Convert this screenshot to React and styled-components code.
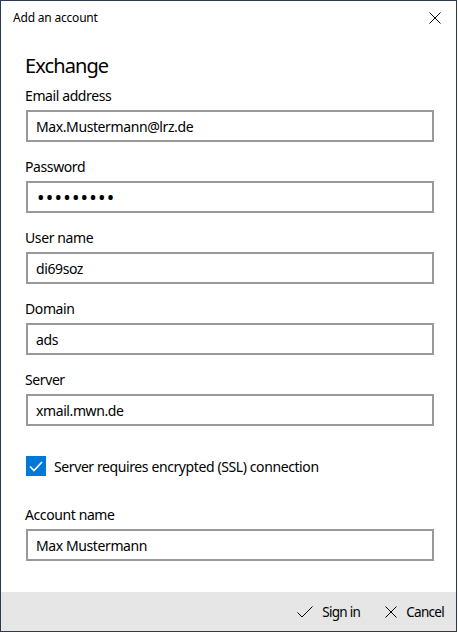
import React from "react";
import styled, { createGlobalStyle } from "styled-components";

const Global = createGlobalStyle`
  html, body { margin: 0; padding: 0; background: #ffffff; }
  body { font-family: "Noto Sans", "Open Sans", sans-serif; color: #000; }
`;

const Window = styled.div`
  box-sizing: border-box;
  width: 457px;
  height: 632px;
  border: 1px solid #2b3b4b;
  background: #fff;
  display: flex;
  flex-direction: column;
`;

const TitleBar = styled.div`
  height: 33px;
  display: flex;
  align-items: center;
  justify-content: space-between;
  padding: 0 15px 0 12px;
  font-size: 12px;
  letter-spacing: -0.2px;
`;

const TitleText = styled.span`
  line-height: 16px;
`;

const IconBox = styled.span`
  display: inline-flex;
  align-items: center;
  justify-content: center;
  width: ${(p) => p.$size || 12}px;
  height: ${(p) => p.$size || 12}px;
`;

const Content = styled.div`
  flex: 1;
  display: flex;
  flex-direction: column;
  padding: 18px 23px 0 24px;
`;

const Heading = styled.h1`
  margin: 0 0 6px;
  font-size: 20px;
  font-weight: 400;
  line-height: 28px;
  letter-spacing: -0.9px;
`;

const Fields = styled.div`
  display: flex;
  flex-direction: column;
  gap: 15px;
`;

const Field = styled.label`
  display: flex;
  flex-direction: column;
  padding-left: 1px;
`;

const Label = styled.span`
  font-size: 14px;
  line-height: 20px;
  margin-bottom: 4px;
  margin-left: -1px;
  letter-spacing: -0.4px;
`;

const Input = styled.input`
  box-sizing: border-box;
  width: 408px;
  height: 32px;
  border: 2px solid #999999;
  padding: 0 8px;
  margin: 0;
  font-family: inherit;
  font-size: 14px;
  color: #000;
  background: #fff;
  outline: none;
  letter-spacing: -0.4px;

  &[type="password"] {
    font-size: 20px;
    letter-spacing: 1.2px;
    padding-left: 9px;
  }
`;

const CheckRow = styled.div`
  display: flex;
  align-items: center;
  gap: 8px;
  margin: 30px 0 29px 1px;
  font-size: 14px;
  letter-spacing: -0.4px;
  height: 20px;
`;

const CheckBox = styled.span`
  width: 20px;
  height: 20px;
  background: #0078d7;
  display: inline-flex;
  align-items: center;
  justify-content: center;
`;

const Footer = styled.div`
  height: 39px;
  background: #e6e6e6;
  display: flex;
  align-items: center;
  justify-content: flex-end;
  gap: 25px;
  padding: 0 12px 0 0;
`;

const FooterButton = styled.button`
  display: inline-flex;
  align-items: center;
  gap: 9px;
  border: none;
  background: transparent;
  padding: 0;
  font-family: inherit;
  font-size: 13.5px;
  letter-spacing: -0.7px;
  color: #000;
  line-height: 20px;
`;

const CloseIcon = ({ size = 12 }) => (
  <IconBox $size={size}>
    <svg width={size} height={size} viewBox="0 0 12 12">
      <path d="M0.5 0.5 L11.5 11.5 M11.5 0.5 L0.5 11.5" stroke="#000" strokeWidth="1" fill="none" />
    </svg>
  </IconBox>
);

const CheckIcon = () => (
  <IconBox $size={16}>
    <svg width="16" height="12" viewBox="0 0 16 12">
      <path d="M0.5 6.5 L5 11 L15.5 0.5" stroke="#000" strokeWidth="1" fill="none" />
    </svg>
  </IconBox>
);

const fields = [
  { label: "Email address", value: "Max.Mustermann@lrz.de" },
  { label: "Password", value: "123456789", type: "password" },
  { label: "User name", value: "di69soz" },
  { label: "Domain", value: "ads" },
  { label: "Server", value: "xmail.mwn.de" },
];

export default function App() {
  return (
    <>
      <Global />
      <Window>
        <TitleBar>
          <TitleText>Add an account</TitleText>
          <CloseIcon />
        </TitleBar>
        <Content>
          <Heading>Exchange</Heading>
          <Fields>
            {fields.map((f) => (
              <Field key={f.label}>
                <Label>{f.label}</Label>
                <Input type={f.type || "text"} defaultValue={f.value} readOnly />
              </Field>
            ))}
          </Fields>
          <CheckRow>
            <CheckBox>
              <svg width="14" height="11" viewBox="0 0 14 11">
                <path d="M1 5.5 L5 9.5 L13 1" stroke="#fff" strokeWidth="1.6" fill="none" />
              </svg>
            </CheckBox>
            <span>Server requires encrypted (SSL) connection</span>
          </CheckRow>
          <Field>
            <Label>Account name</Label>
            <Input type="text" defaultValue="Max Mustermann" readOnly />
          </Field>
        </Content>
        <Footer>
          <FooterButton>
            <CheckIcon />
            Sign in
          </FooterButton>
          <FooterButton>
            <CloseIcon />
            Cancel
          </FooterButton>
        </Footer>
      </Window>
    </>
  );
}
